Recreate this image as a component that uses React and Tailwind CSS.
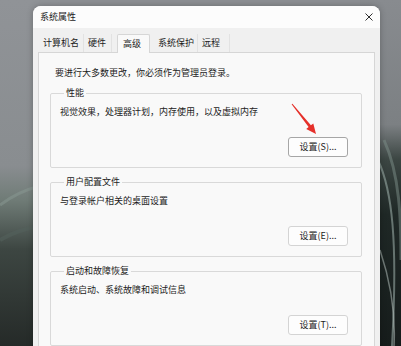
import React from 'react';

const font = "font-['Noto_Sans_CJK_SC','Microsoft_YaHei',sans-serif]";

const Wallpaper = () => (
  <svg className="absolute inset-0" width="401" height="346" viewBox="0 0 401 346">
    <defs>
      <linearGradient id="leftBg" x1="0" y1="0" x2="0" y2="1">
        <stop offset="0" stopColor="#909397" />
        <stop offset="0.48" stopColor="#898d90" />
        <stop offset="0.58" stopColor="#6f7b76" />
        <stop offset="0.72" stopColor="#3d4642" />
        <stop offset="1" stopColor="#252a28" />
      </linearGradient>
      <linearGradient id="rightBg" x1="0" y1="0" x2="0" y2="1">
        <stop offset="0" stopColor="#888b8f" />
        <stop offset="0.36" stopColor="#7c8083" />
        <stop offset="0.46" stopColor="#3c4643" />
        <stop offset="0.62" stopColor="#1f2826" />
        <stop offset="1" stopColor="#161c1b" />
      </linearGradient>
    </defs>
    <rect x="0" y="0" width="60" height="346" fill="url(#leftBg)" />
    <rect x="360" y="0" width="41" height="346" fill="url(#rightBg)" />
    <path d="M0 205 C12 196 24 190 40 186" stroke="#8a9a94" strokeWidth="3" fill="none" opacity="0.5" />
    <path d="M0 240 C14 232 26 228 40 226" stroke="#53605b" strokeWidth="4" fill="none" opacity="0.6" />
    <path d="M378 160 C392 190 398 240 392 346" stroke="#a3b4ae" strokeWidth="2" fill="none" opacity="0.55" />
    <path d="M384 140 C400 175 401 220 401 260" stroke="#7e8f8a" strokeWidth="3" fill="none" opacity="0.5" />
    <path d="M380 250 C390 280 396 310 394 346" stroke="#c0ccc8" strokeWidth="1.5" fill="none" opacity="0.5" />
  </svg>
);

const Tab = ({ label, className, selected }) => (
  <div
    className={
      selected
        ? `h-[19px] flex items-center bg-[#f9f9f9] border border-b-0 border-[#d6d6d6] rounded-t-[2px] ${className}`
        : `h-[18px] flex items-center border-r border-[#e2e2e2] ${className}`
    }
  >
    {label}
  </div>
);

const Group = ({ title, text, button, strong, className }) => (
  <fieldset className={`border border-[#d9d9d9] rounded-[2px] pl-[9px] pr-[13px] pb-[10px] flex flex-col ${className}`}>
    <legend className="ml-[4px] px-[2px] text-[9px] leading-[12px]">{title}</legend>
    <div className="pt-[7px] text-[9px] leading-[12px]">{text}</div>
    <button
      className={`self-end mt-[19px] w-[60px] h-[20px] rounded-[3px] bg-[#fdfdfd] text-[9px] leading-[12px] border ${
        strong ? 'border-[#a6a6a6]' : 'border-[#d4d4d4]'
      }`}
    >
      {button}
    </button>
  </fieldset>
);

const App = () => {
  return (
    <div className={`relative w-[401px] h-[346px] overflow-hidden bg-[#8c8f93] text-[#1b1b1b] ${font}`}>
      <Wallpaper />

      {/* dialog window */}
      <div className="relative ml-[33px] mt-[6px] w-[347px] h-[360px] bg-[#f0f0f0] rounded-t-[8px] shadow-[0_0_6px_rgba(0,0,0,0.25)] flex flex-col overflow-hidden">
        {/* title bar */}
        <div className="h-[22px] flex items-center justify-between pl-[7px] pr-[7px] bg-[#fcfcfc]">
          <span className="text-[9px] leading-[12px]">系统属性</span>
          <svg width="8" height="8" viewBox="0 0 8 8">
            <path d="M0.5 0.5 L7.5 7.5 M7.5 0.5 L0.5 7.5" stroke="#2f2f2f" strokeWidth="1" />
          </svg>
        </div>

        {/* tabs */}
        <div className="h-[24px] flex items-end pl-[5px] bg-[#f0f0f0] text-[9px] leading-[12px]">
          <Tab label="计算机名" className="w-[46px] pl-[5px]" />
          <Tab label="硬件" className="w-[28px] pl-[4px]" />
          <Tab label="高级" selected className="ml-[5px] w-[33px] pl-[5px] -mb-px relative z-10" />
          <Tab label="系统保护" className="w-[48px] pl-[8px]" />
          <Tab label="远程" className="w-[32px] pl-[4px]" />
        </div>

        {/* tab page */}
        <div className="flex-1 mx-[5px] border border-[#d6d6d6] bg-[#f9f9f9] pl-[11px] pr-[12px] pt-[14px] flex flex-col">
          <div className="pl-[5px] text-[9px] leading-[12px]">要进行大多数更改，你必须作为管理员登录。</div>

          <Group
            className="mt-[8px]"
            title="性能"
            text="视觉效果，处理器计划，内存使用，以及虚拟内存"
            button="设置(S)..."
            strong
          />
          <Group
            className="mt-[8px]"
            title="用户配置文件"
            text="与登录帐户相关的桌面设置"
            button="设置(E)..."
          />
          <Group
            className="mt-[8px]"
            title="启动和故障恢复"
            text="系统启动、系统故障和调试信息"
            button="设置(T)..."
          />
        </div>
      </div>

      {/* red pointer arrow */}
      <svg className="absolute inset-0 pointer-events-none" width="401" height="346" viewBox="0 0 401 346">
        <polygon
          points="292.4,103.7 310.9,125.3 313.3,123.4 316,134 306.2,129 308.6,127.1 291.6,104.3"
          fill="#e5302a"
        />
      </svg>
    </div>
  );
};

export default App;
